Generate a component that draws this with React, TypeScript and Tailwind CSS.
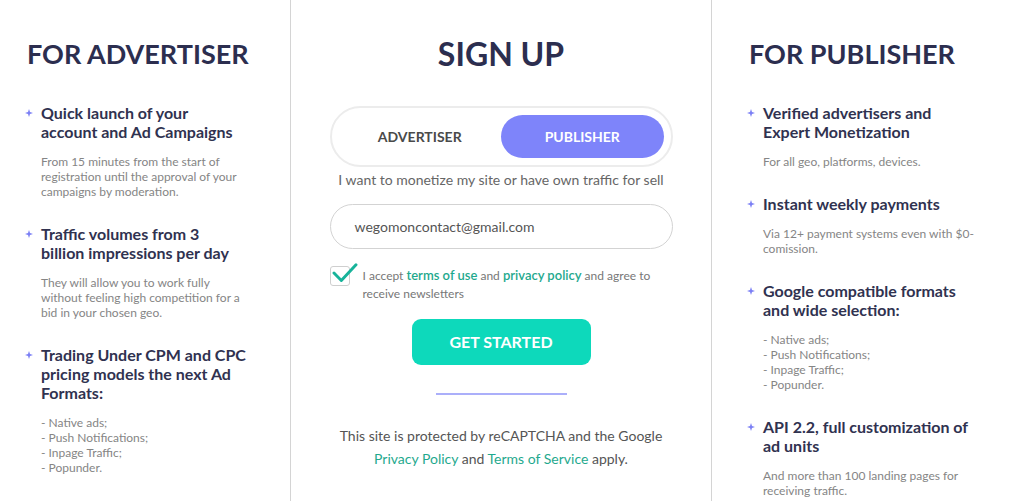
import React from "react";

type Feature = {
  title: string;
  text?: string;
  list?: string[];
};

const formats = ["- Native ads;", "- Push Notifications;", "- Inpage Traffic;", "- Popunder."];

// line breaks follow the design copy
const advertiser: Feature[] = [
  {
    title: "Quick launch of your\naccount and Ad Campaigns",
    text: "From 15 minutes from the start of\nregistration until the approval of your\ncampaigns by moderation.",
  },
  {
    title: "Traffic volumes from 3\nbillion impressions per day",
    text: "They will allow you to work fully\nwithout feeling high competition for a\nbid in your chosen geo.",
  },
  {
    title: "Trading Under CPM and CPC\npricing models the next Ad\nFormats:",
    list: formats,
  },
];

const publisher: Feature[] = [
  {
    title: "Verified advertisers and\nExpert Monetization",
    text: "For all geo, platforms, devices.",
  },
  {
    title: "Instant weekly payments",
    text: "Via 12+ payment systems even with $0-\ncomission.",
  },
  {
    title: "Google compatible formats\nand wide selection:",
    list: formats,
  },
  {
    title: "API 2.2, full customization of\nad units",
    text: "And more than 100 landing pages for\nreceiving traffic.",
  },
];

const Star = () => (
  <svg viewBox="0 0 8 8" className="w-2 h-2 mt-[6px] shrink-0">
    <path d="M4 0 L5 3 L8 4 L5 5 L4 8 L3 5 L0 4 L3 3 Z" fill="#7b7ff5" />
  </svg>
);

const FeatureColumn = ({ heading, items }: { heading: string; items: Feature[] }) => (
  <div>
    <h2 className="pl-[2px] text-[27px] leading-[32px] font-bold text-[#2c2e4f]">{heading}</h2>
    <ul className="mt-[33px]">
      {items.map((item, i) => (
        <li key={i} className="flex mb-[25px]">
          <Star />
          <div className="ml-2 w-[232px] whitespace-pre-line">
            <h3 className="text-base leading-[19px] font-bold text-[#303250]">{item.title}</h3>
            {item.text && (
              <p className="mt-[13px] text-xs leading-[15px] text-[#858585]">{item.text}</p>
            )}
            {item.list && (
              <div className="mt-[13px] text-xs leading-[15px] text-[#858585]">
                {item.list.map((l) => (
                  <div key={l}>{l}</div>
                ))}
              </div>
            )}
          </div>
        </li>
      ))}
    </ul>
  </div>
);

export default function App() {
  return (
    <div className="flex h-[501px] w-[1024px] overflow-hidden bg-white font-['Lato',sans-serif]">
      {/* Left column */}
      <div className="w-[291px] shrink-0 border-r border-[#d4d4d4] pl-[25px] pt-[38px]">
        <FeatureColumn heading="FOR ADVERTISER" items={advertiser} />
      </div>

      {/* Sign up */}
      <div className="w-[421px] shrink-0 border-r border-[#d4d4d4] pt-[35px] flex flex-col items-center">
        <h1 className="text-[32px] leading-[38px] font-bold text-[#2c2e4f]">SIGN UP</h1>

        <div className="mt-[33px] w-[343px] h-[61px] rounded-full border-2 border-[#ececec] p-[7px] grid grid-cols-2">
          <button className="rounded-full text-sm font-bold text-[#4a4a4a]">ADVERTISER</button>
          <button className="rounded-full bg-[#7e84fa] text-sm font-bold text-white">PUBLISHER</button>
        </div>

        <p className="mt-[3px] text-sm leading-5 text-[#666]">
          I want to monetize my site or have own traffic for sell
        </p>

        <div className="mt-[14px] w-[343px] h-[45px] rounded-full border border-[#d3d3d3] flex items-center pl-6 text-sm text-[#555]">
          wegomoncontact@gmail.com
        </div>

        <div className="mt-[17px] w-[343px] flex">
          <div className="relative w-[20px] h-[20px] shrink-0 rounded-[3px] border border-[#cfcfcf]">
            <svg viewBox="0 0 28 24" className="absolute left-[1px] top-[-4px] w-[26px] h-[22px]">
              <path
                d="M2 11 L10 19 L26 2"
                fill="none"
                stroke="#17b39a"
                strokeWidth="3.2"
                strokeLinecap="round"
                strokeLinejoin="round"
              />
            </svg>
          </div>
          <p className="ml-[13px] text-xs leading-[18px] text-[#777]">
            I accept <a className="text-[13px] font-semibold text-[#1fa98e]">terms of use</a> and{" "}
            <a className="text-[13px] font-semibold text-[#1fa98e]">privacy policy</a> and agree to
            <br />
            receive newsletters
          </p>
        </div>

        <button className="mt-[16px] w-[179px] h-[46px] rounded-[9px] bg-[#0dd9bb] text-white text-base font-bold">
          GET STARTED
        </button>

        <div className="mt-[28px] w-[131px] h-[2px] bg-[#abaffa]" />

        <p className="mt-[29px] text-sm leading-[23px] text-[#555] text-center">
          This site is protected by reCAPTCHA and the Google
          <br />
          <a className="text-[#1fa98e]">Privacy Policy</a> and{" "}
          <a className="text-[#1fa98e]">Terms of Service</a> apply.
        </p>
      </div>

      {/* Right column */}
      <div className="flex-1 pl-[35px] pt-[38px]">
        <FeatureColumn heading="FOR PUBLISHER" items={publisher} />
      </div>
    </div>
  );
}
